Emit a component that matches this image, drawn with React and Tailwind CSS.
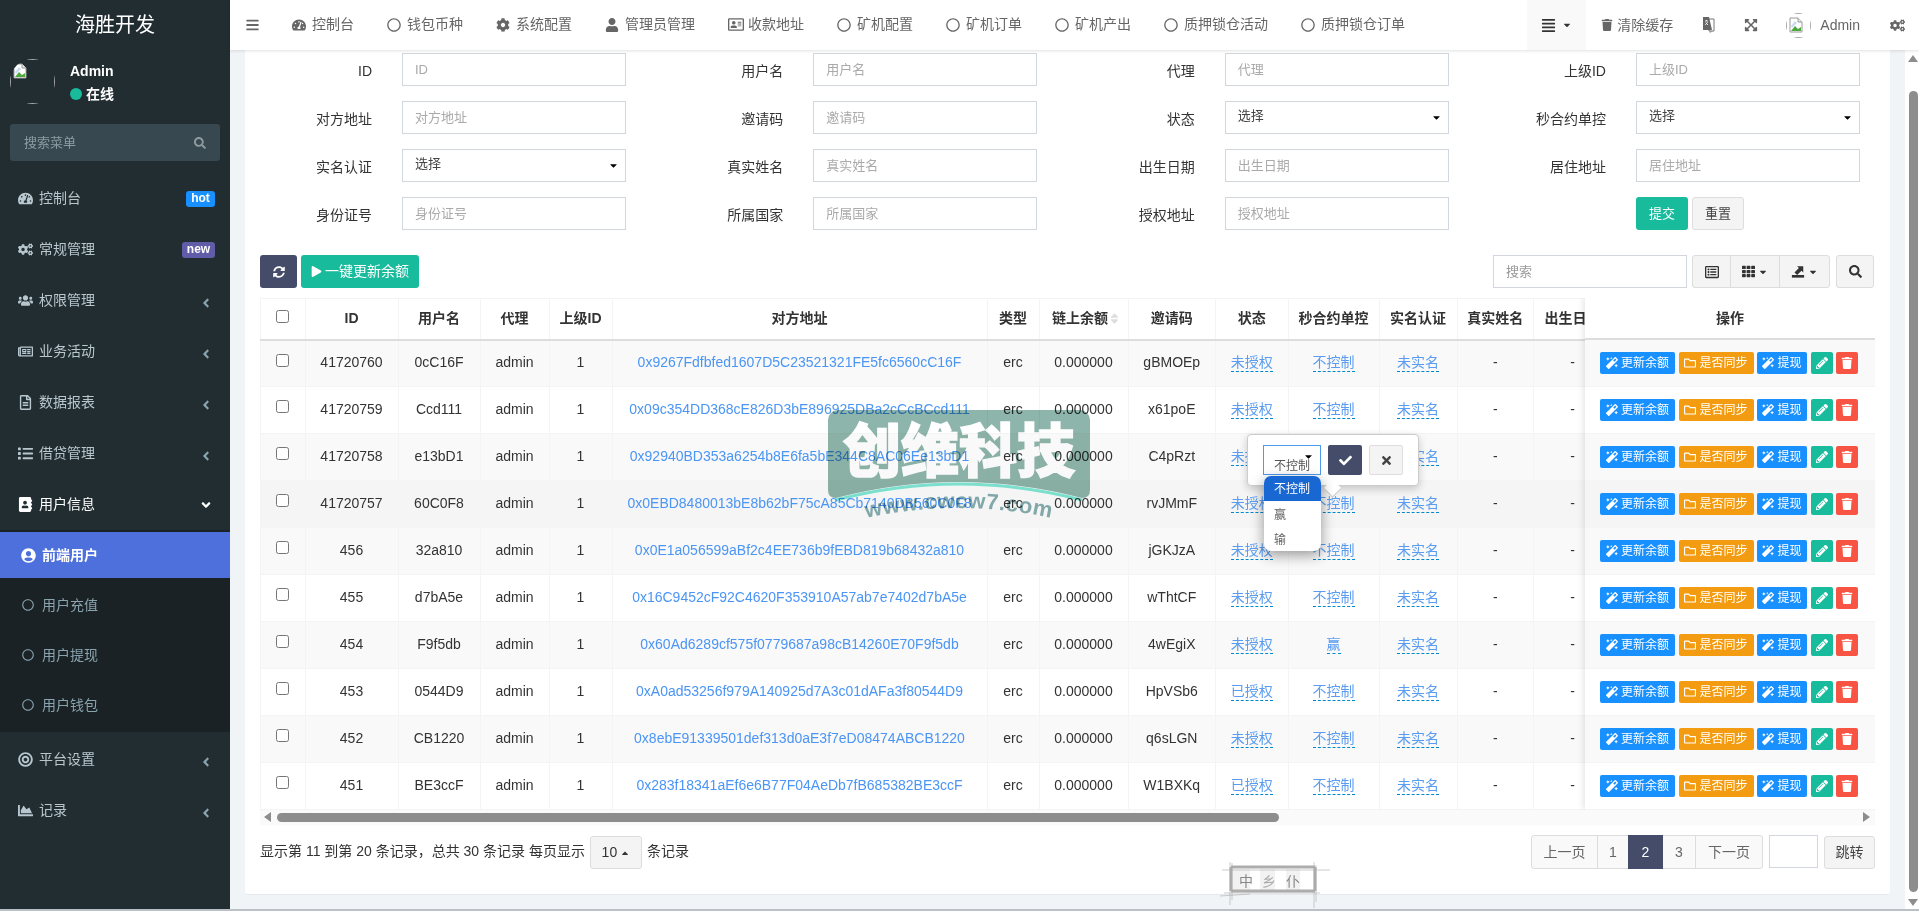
import React from 'react';
import {
  FaTachometerAlt, FaRegCircle, FaCog, FaUser, FaRegAddressCard, FaCogs, FaUsers, FaRegNewspaper,
  FaRegFileAlt, FaList, FaAddressBook, FaUserCircle, FaBullseye, FaChartArea, FaAngleLeft, FaAngleDown,
  FaSearch, FaSyncAlt, FaPlay, FaBars, FaAlignJustify, FaTrash, FaExpandArrowsAlt,
  FaRegListAlt, FaTh, FaMagic, FaRegFolder, FaPencilAlt, FaCheck, FaTimes, FaCaretDown, FaCaretUp, FaSort,
} from 'react-icons/fa';

const topNav = [
  { icon: FaTachometerAlt, text: '控制台' },
  { icon: FaRegCircle, text: '钱包币种' },
  { icon: FaCog, text: '系统配置' },
  { icon: FaUser, text: '管理员管理' },
  { icon: FaRegAddressCard, text: '收款地址', wide: true },
  { icon: FaRegCircle, text: '矿机配置' },
  { icon: FaRegCircle, text: '矿机订单' },
  { icon: FaRegCircle, text: '矿机产出' },
  { icon: FaRegCircle, text: '质押锁仓活动' },
  { icon: FaRegCircle, text: '质押锁仓订单' },
];

const formRows = [
  ['ID', '用户名', '代理', '上级ID'],
  ['对方地址', '邀请码', '状态:select', '秒合约单控:select'],
  ['实名认证:select', '真实姓名', '出生日期', '居住地址'],
  ['身份证号', '所属国家', '授权地址', null],
];

const rows = [
  ['41720760', '0cC16F', '0x9267Fdfbfed1607D5C23521321FE5fc6560cC16F', 'gBMOEp', '未授权', '不控制'],
  ['41720759', 'Ccd111', '0x09c354DD368cE826D3bE896925DBa2cCcBCcd111', 'x61poE', '未授权', '不控制'],
  ['41720758', 'e13bD1', '0x92940BD353a6254b8E6fa5bE344C8AC06Ee13bD1', 'C4pRzt', '未授权', '不控制'],
  ['41720757', '60C0F8', '0x0EBD8480013bE8b62bF75cA85Cb7140DB560C0F8', 'rvJMmF', '未授权', '不控制'],
  ['456', '32a810', '0x0E1a056599aBf2c4EE736b9fEBD819b68432a810', 'jGKJzA', '未授权', '不控制'],
  ['455', 'd7bA5e', '0x16C9452cF92C4620F353910A57ab7e7402d7bA5e', 'wThtCF', '未授权', '不控制'],
  ['454', 'F9f5db', '0x60Ad6289cf575f0779687a98cB14260E70F9f5db', '4wEgiX', '未授权', '赢'],
  ['453', '0544D9', '0xA0ad53256f979A140925d7A3c01dAFa3f80544D9', 'HpVSb6', '已授权', '不控制'],
  ['452', 'CB1220', '0x8ebE91339501def313d0aE3f7eD08474ABCB1220', 'q6sLGN', '未授权', '不控制'],
  ['451', 'BE3ccF', '0x283f18341aEf6e6B77F04AeDb7fB685382BE3ccF', 'W1BXKq', '已授权', '不控制'],
];

const rowBg = (i) => (i === 3 ? 'bg-[#f5f5f5]' : i % 2 === 0 ? 'bg-[#f9f9f9]' : 'bg-white');

// 깨진 이미지 아이콘
function BrokenImage({ className }) {
  return (
    <svg viewBox="0 0 16 16" className={className}>
      <path d="M2 1h8l4 4v10H2z" fill="#fff" stroke="#9a9a9a" strokeWidth="1" />
      <path d="M10 1v4h4" fill="#e8e8e8" stroke="#9a9a9a" strokeWidth="1" />
      <path d="M3 14l4-5 3 3 3-2v4z" fill="#4fa83d" />
      <path d="M3 9l4-5 2 2-5 5z" fill="#c9dcf2" />
    </svg>
  );
}

function Avatar({ size }) {
  return (
    <div className={`${size} shrink-0 rounded-full overflow-hidden`}>
      <div className="w-full h-full border border-[#a8a8a8] pl-[1px] pt-[3px]">
        <BrokenImage className="w-[16px] h-[16px]" />
      </div>
    </div>
  );
}

function LangIcon() {
  return (
    <svg viewBox="0 0 13 18" className="w-[13px] h-[18px] ml-[29px]">
      <path d="M5 3h7v12H7z" fill="#fff" stroke="#777" strokeWidth="1" />
      <path d="M1 1h6l3 13H1z" fill="#666" />
      <path d="M3 5h3M4.5 4v1M3.2 9l2.6-3M3.5 6.5l2.5 2.5" stroke="#fff" strokeWidth="0.8" fill="none" />
      <path d="M7 15l1 2 3-2z" fill="#999" />
    </svg>
  );
}

function SideItem({ icon: Icon, text, badge, open, active }) {
  return (
    <div className={`flex items-center h-[51px] pl-[18px] pr-[16px] ${active ? 'text-white' : 'text-[#b8c7ce]'}`}>
      <Icon className="w-[15px] text-[15px] shrink-0" />
      <span className="ml-[6px] text-[14px] flex-1">{text}</span>
      {badge === 'hot' && <span className="h-[16px] w-[29px] -mr-[1px] rounded-[3px] bg-[#1890ff] text-white text-[12px] font-bold leading-[15px] text-center">hot</span>}
      {badge === 'new' && <span className="h-[16px] w-[33px] -mr-[1px] rounded-[3px] bg-[#605ca8] text-white text-[12px] font-bold leading-[15px] text-center">new</span>}
      {badge === undefined && (open
        ? <FaAngleDown className="text-[14px] text-white mr-[1px]" />
        : <FaAngleLeft className="text-[14px] text-[#8aa4af] mt-[5px] mr-[1px]" />)}
    </div>
  );
}

function SubItem({ text }) {
  return (
    <div className="flex items-center h-[46px] pl-[22px] text-[#8aa4af] text-[14px]">
      <FaRegCircle className="text-[12px]" />
      <span className="ml-[8px]">{text}</span>
    </div>
  );
}

function Sidebar() {
  return (
    <aside className="w-[230px] shrink-0 bg-[#222d32] flex flex-col">
      <div className="h-[50px] flex items-center justify-center text-[20px] text-white">海胜开发</div>
      <div className="flex h-[74px] pl-[10px] pt-[9px]">
        <Avatar size="w-[45px] h-[45px]" />
        <div className="ml-[15px] text-white">
          <div className="text-[14px] font-bold leading-[20px] mt-[2px]">Admin</div>
          <div className="flex items-center text-[14px] font-bold leading-[20px] mt-[3px]">
            <span className="w-[12px] h-[12px] rounded-full bg-[#18bc9c] mr-[4px]"></span>在线
          </div>
        </div>
      </div>
      <div className="mx-[10px] h-[37px] rounded-[3px] bg-[#374850] flex items-center justify-between pl-[14px] pr-[14px] text-[13px] text-[#8d9ba2]">
        搜索菜单
        <FaSearch className="text-[12px] text-[#8f9a9f]" />
      </div>
      <div className="mt-[12px]">
        <SideItem icon={FaTachometerAlt} text="控制台" badge="hot" />
        <SideItem icon={FaCogs} text="常规管理" badge="new" />
        <SideItem icon={FaUsers} text="权限管理" />
        <SideItem icon={FaRegNewspaper} text="业务活动" />
        <SideItem icon={FaRegFileAlt} text="数据报表" />
        <SideItem icon={FaList} text="借贷管理" />
        <SideItem icon={FaAddressBook} text="用户信息" open active />
      </div>
      <div className="bg-[#1a2226] pt-[2px] pb-[4px] flex flex-col gap-[4px]">
        <div className="flex items-center h-[46px] pl-[21px] bg-[#4e70dc] text-white text-[14px]">
          <FaUserCircle className="text-[15px]" />
          <span className="ml-[6px] font-bold">前端用户</span>
        </div>
        <SubItem text="用户充值" />
        <SubItem text="用户提现" />
        <SubItem text="用户钱包" />
      </div>
      <div className="mt-[2px]">
        <SideItem icon={FaBullseye} text="平台设置" />
        <SideItem icon={FaChartArea} text="记录" />
      </div>
    </aside>
  );
}

function Header() {
  return (
    <header className="h-[50px] shrink-0 bg-white flex items-center justify-between shadow-[0_1px_3px_rgba(0,0,0,0.12)] relative text-[14px] text-[#666]">
      <div className="flex items-center pl-[16px] pb-[1px]">
        <FaBars className="text-[14px] w-[13px]" />
        <nav className="flex items-center gap-[33px] ml-[33px]">
          {topNav.map((item) => (
            <div key={item.text} className={`flex items-center ${item.wide ? 'gap-[4px]' : 'gap-[6px]'}`}>
              <item.icon className={`${item.wide ? 'w-[16px] text-[15px]' : 'w-[14px] text-[14px]'}`} />
              <span>{item.text}</span>
            </div>
          ))}
        </nav>
      </div>
      <div className="flex items-center pr-[14px] h-full">
        <div className="w-[59px] h-full bg-[#f9f9f9] flex items-center justify-center gap-[6px] text-[#333]">
          <FaAlignJustify className="text-[15px]" />
          <FaCaretDown className="text-[10px]" />
        </div>
        <FaTrash className="ml-[15px] text-[12px]" />
        <span className="ml-[4px]">清除缓存</span>
        <LangIcon />
        <FaExpandArrowsAlt className="ml-[29px] text-[14px]" />
        <div className="ml-[28px]"><Avatar size="w-[25px] h-[25px]" /></div>
        <span className="ml-[9px]">Admin</span>
        <FaCogs className="ml-[30px] text-[15px]" />
      </div>
    </header>
  );
}

function SearchForm() {
  return (
    <div className="grid grid-cols-[366px_411.33px_411.33px_411.33px] gap-y-[15px] text-[14px] text-[#333]">
      {formRows.flat().map((cell, idx) => {
        if (!cell) {
          return (
            <div key={idx} className="flex justify-end gap-[4px] pr-0">
              <div className="w-[224px] flex gap-[4px] text-[13px]">
                <button className="w-[52px] h-[33px] rounded-[3px] bg-[#18bc9c] text-white">提交</button>
                <button className="w-[52px] h-[33px] rounded-[3px] bg-[#f4f4f4] border border-[#ddd] text-[#444]">重置</button>
              </div>
            </div>
          );
        }
        const [label, kind] = cell.split(':');
        return (
          <div key={idx} className="flex items-center justify-end gap-[30px]">
            <label className="pt-[3px]">{label}</label>
            {kind === 'select' ? (
              <div className="w-[224px] h-[33px] border border-[#d2d6de] flex items-center justify-between pl-[12px] pr-[6px] pb-[3px] text-[13px] text-[#444]">
                选择
                <FaCaretDown className="text-[11px] text-black mt-[3px]" />
              </div>
            ) : (
              <input placeholder={label} className="w-[224px] h-[33px] border border-[#d2d6de] px-[12px] text-[13px] outline-none placeholder:text-[#aaa]" />
            )}
          </div>
        );
      })}
    </div>
  );
}

function ExportIcon() {
  return (
    <svg viewBox="0 0 16 16" className="w-[14px] h-[15px]" fill="currentColor">
      <path d="M1 12h14v3H1z" />
      <path d="M4 9l5-5-2-2h7v7l-2-2-5 5z" />
    </svg>
  );
}

function Toolbar() {
  return (
    <div className="flex items-center justify-between mt-[25px] h-[33px] pr-[1px] text-[#333]">
      <div className="flex gap-[4px]">
        <button className="w-[37px] h-[33px] rounded-[3px] bg-[#444c69] text-white flex items-center justify-center">
          <FaSyncAlt className="text-[12px]" />
        </button>
        <button className="w-[118px] h-[33px] rounded-[3px] bg-[#18bc9c] text-white text-[14px] flex items-center justify-center gap-[3px]">
          <FaPlay className="text-[11px]" />一键更新余额
        </button>
      </div>
      <div className="flex">
        <input placeholder="搜索" className="w-[194px] h-[33px] border border-[#d2d6de] px-[12px] text-[13px] outline-none placeholder:text-[#999]" />
        <div className="flex ml-[5px] h-[33px] rounded-[3px] border border-[#ddd] bg-[#f4f4f4]">
          <div className="w-[38px] flex items-center justify-center border-r border-[#ddd]"><FaRegListAlt className="text-[14px]" /></div>
          <div className="w-[49px] flex items-center justify-center gap-[3px] border-r border-[#ddd]"><FaTh className="text-[13px]" /><FaCaretDown className="text-[10px]" /></div>
          <div className="w-[49px] flex items-center justify-center gap-[3px]"><ExportIcon /><FaCaretDown className="text-[10px]" /></div>
        </div>
        <button className="w-[38px] h-[33px] ml-[6px] rounded-[3px] border border-[#ddd] bg-[#f4f4f4] flex items-center justify-center"><FaSearch className="text-[13px]" /></button>
      </div>
    </div>
  );
}

function Editable({ children }) {
  return <span className="text-[#5a9cf0] border-b border-dashed border-[#0088cc] pb-[1px]">{children}</span>;
}

function OpButton({ color, width, icon: Icon, text }) {
  return (
    <button className={`${color} ${width} h-[22px] rounded-[2px] text-white text-[12px] flex items-center justify-center gap-[3px] shrink-0`}>
      <Icon className="text-[12px]" />
      {text && <span>{text}</span>}
    </button>
  );
}

function DataTable() {
  const th = 'font-bold text-[14px] text-[#333] border-l border-[#f4f4f4] text-center';
  const td = 'border-l border-[#f4f4f4] text-center text-[14px] whitespace-nowrap overflow-hidden pb-[2px]';
  const dark = `${td} text-[#333]`;
  return (
    <div className="relative mt-[10px] h-[512px] overflow-hidden">
      <table className="table-fixed border-collapse w-[1615px]">
        <colgroup>
          {[44.5, 93, 82, 69, 63, 375, 52, 89, 87.5, 72.5, 91, 78, 76.5, 78, 264].map((w, i) => (
            <col key={i} style={{ width: w }} />
          ))}
        </colgroup>
        <thead>
          <tr className="h-[41px] border-t border-b-2 border-[#f4f4f4] border-b-[#ddd]">
            <th className={th}><input type="checkbox" className="w-[13px] h-[13px] align-middle -mt-[7px]" /></th>
            <th className={th}>ID</th>
            <th className={th}>用户名</th>
            <th className={th}>代理</th>
            <th className={th}>上级ID</th>
            <th className={th}>对方地址</th>
            <th className={th}>类型</th>
            <th className={th}>
              <span className="inline-flex items-center pl-[6px]">链上余额<FaSort className="text-[13px] text-[#ddd]" /></span>
            </th>
            <th className={th}>邀请码</th>
            <th className={th}>状态</th>
            <th className={th}>秒合约单控</th>
            <th className={th}>实名认证</th>
            <th className={th}>真实姓名</th>
            <th className={`${th} whitespace-nowrap overflow-hidden`}>出生日期</th>
            <th className={th}></th>
          </tr>
        </thead>
        <tbody>
          {rows.map((r, i) => (
            <tr key={r[0]} className={`h-[47px] border-b border-[#f4f4f4] ${rowBg(i)}`}>
              <td className={dark}><input type="checkbox" className="w-[13px] h-[13px] align-middle -mt-[6px]" /></td>
              <td className={dark}>{r[0]}</td>
              <td className={dark}>{r[1]}</td>
              <td className={dark}>admin</td>
              <td className={dark}>1</td>
              <td className={`${td} text-[#4b95f5]`}>{r[2]}</td>
              <td className={dark}>erc</td>
              <td className={dark}>0.000000</td>
              <td className={dark}>{r[3]}</td>
              <td className={td}><Editable>{r[4]}</Editable></td>
              <td className={td}><Editable>{r[5]}</Editable></td>
              <td className={td}><Editable>未实名</Editable></td>
              <td className={dark}>-</td>
              <td className={dark}>-</td>
              <td className={td}></td>
            </tr>
          ))}
        </tbody>
      </table>
      {/* 고정된 操作 칼럼 */}
      <div className="absolute top-0 right-0 w-[290px] h-[511px] bg-white shadow-[-2px_0_6px_rgba(0,0,0,0.1)]">
        <div className="h-[42px] flex items-center justify-center border-b-2 border-[#ddd] font-bold text-[14px] text-[#333]">操作</div>
        {rows.map((r, i) => (
          <div key={r[0]} className={`h-[47px] flex items-center gap-[3.5px] pl-[15px] border-b border-[#f4f4f4] ${rowBg(i)}`}>
            <OpButton color="bg-[#1890ff]" width="w-[75px]" icon={FaMagic} text="更新余额" />
            <OpButton color="bg-[#f39c12]" width="w-[75px]" icon={FaRegFolder} text="是否同步" />
            <OpButton color="bg-[#1890ff]" width="w-[50px]" icon={FaMagic} text="提现" />
            <OpButton color="bg-[#18bc9c]" width="w-[22px]" icon={FaPencilAlt} />
            <OpButton color="bg-[#f75444]" width="w-[22px]" icon={FaTrash} />
          </div>
        ))}
      </div>
    </div>
  );
}

function HScroll() {
  return (
    <div className="h-[16px] -mt-[1px] bg-[#fafafa] flex items-center pl-[4px] pr-[5px] text-[#8d8d8d]">
      <span className="w-0 h-0 border-y-[5px] border-y-transparent border-r-[7px] border-r-[#8d8d8d]"></span>
      <div className="ml-[6px] w-[1002px] h-[9px] rounded-full bg-[#8d8d8d]"></div>
      <span className="ml-auto w-0 h-0 border-y-[5px] border-y-transparent border-l-[7px] border-l-[#8d8d8d]"></span>
    </div>
  );
}

function Footer() {
  const cell = 'h-[34px] flex items-center justify-center border border-[#ddd] bg-[#f9f9f9] text-[#666] -ml-[1px]';
  return (
    <div className="flex justify-between mt-[10px] text-[14px] text-[#333]">
      <div className="flex items-start">
        <span className="leading-[33px]">显示第 11 到第 20 条记录，总共 30 条记录 每页显示</span>
        <div className="ml-[5px] mt-[1px] w-[52px] h-[33px] rounded-[3px] border border-[#ddd] bg-[#f4f4f4] flex items-center justify-center gap-[3px]">
          10 <FaCaretUp className="text-[10px]" />
        </div>
        <span className="ml-[5px] leading-[33px]">条记录</span>
      </div>
      <div className="flex items-start">
        <div className={`${cell} w-[67px] ml-0 rounded-l-[3px]`}>上一页</div>
        <div className={`${cell} w-[32px]`}>1</div>
        <div className="h-[34px] w-[35px] -ml-[1px] flex items-center justify-center bg-[#444c69] text-white">2</div>
        <div className={`${cell} w-[33px] border-l-0 ml-0`}>3</div>
        <div className={`${cell} w-[68px] rounded-r-[3px]`}>下一页</div>
        <input className="ml-[6px] w-[49px] h-[33px] border border-[#d2d6de] outline-none" />
        <button className="ml-[6px] w-[51px] h-[33px] mt-[1px] rounded-[3px] border border-[#ddd] bg-[#f4f4f4] text-[#444]">跳转</button>
      </div>
    </div>
  );
}

function Watermark() {
  return (
    <svg viewBox="0 0 262 122" className="absolute left-[828px] top-[410px] w-[262px] h-[122px] mix-blend-multiply">
      <path d="M10 0H252A10 10 0 0 1 262 10V80Q262 88 254 88Q130 56 8 88Q0 88 0 80V10A10 10 0 0 1 10 0Z" fill="#8eb5ab" />
      <path d="M8 90Q130 58 254 90" fill="none" stroke="#7fe8d5" strokeWidth="3" />
      <text x="131" y="62" textAnchor="middle" fontSize="58" fontWeight="900" fill="#fff" stroke="#fff" strokeWidth="1.5" fontFamily="'Noto Sans CJK SC', sans-serif">创维科技</text>
      <path id="wm-arc" d="M0 118Q130 78 262 118" fill="none" />
      <text fontSize="22" fontWeight="700" fill="#86aeb0" fontFamily="'Liberation Sans', sans-serif" letterSpacing="0.6">
        <textPath href="#wm-arc" startOffset="50%" textAnchor="middle">www.cwcw7.com</textPath>
      </text>
    </svg>
  );
}

function Seal() {
  return (
    <svg viewBox="0 0 110 46" className="absolute left-[1220px] top-[862px] w-[110px] h-[46px]">
      <rect x="11" y="4" width="84" height="26" fill="#fff" />
      <path d="M13 7h17v21H13zM40 7h15v21H40zM66 7h14v21H66z" fill="#e9e9e9" opacity="0.6" />
      <path d="M11 5H95M11 29H95M11 5V29M95 5V29" stroke="#999" strokeWidth="3" fill="none" opacity="0.8" />
      <path d="M2 8H110M4 31H100M0 34L30 32M10 0V43M94 0V46M12 1V38M96 3V40" stroke="#aaa" strokeWidth="1" fill="none" opacity="0.6" />
      <text x="26" y="24" fontSize="14" textAnchor="middle" fill="#888" fontFamily="'Noto Sans CJK SC', sans-serif">中</text>
      <text x="49" y="24" fontSize="14" textAnchor="middle" fill="#aaa" fontFamily="'Noto Sans CJK SC', sans-serif">乡</text>
      <text x="73" y="24" fontSize="14" textAnchor="middle" fill="#888" fontFamily="'Noto Sans CJK SC', sans-serif">仆</text>
    </svg>
  );
}

// x-editable 팝오버 + 열린 select
function Popover() {
  return (
    <>
      <div className="absolute left-[1247px] top-[434px] w-[172px] h-[52px] bg-white rounded-[4px] border border-[#ccc] shadow-[0_3px_8px_rgba(0,0,0,0.2)] flex items-center pl-[15px] gap-[7px]">
        <div className="w-[58px] h-[30px] border border-[#4d9bef] text-[12px] text-[#555] pl-[10px] pt-[13px] leading-[15px] relative">
          不控制
          <FaCaretDown className="absolute right-[6px] top-[5px] text-[11px] text-black" />
        </div>
        <button className="w-[34px] h-[30px] rounded-[2px] bg-[#444c69] text-white flex items-center justify-center"><FaCheck className="text-[13px]" /></button>
        <button className="w-[34px] h-[30px] rounded-[2px] bg-[#f4f4f4] border border-[#ddd] text-[#444] flex items-center justify-center"><FaTimes className="text-[13px]" /></button>
      </div>
      <div className="absolute left-[1326px] top-[482px] w-[13px] h-[13px] rotate-45 bg-white border-r border-b border-[#ccc]"></div>
      <div className="absolute left-[1264px] top-[476px] w-[57px] h-[75px] bg-white rounded-[7px] overflow-hidden shadow-[0_4px_14px_rgba(0,0,0,0.4)] text-[12px] text-[#666]">
        <div className="h-[25px] bg-[#1967d2] text-white pl-[10px] leading-[27px]">不控制</div>
        <div className="h-[25px] pl-[10px] leading-[29px]">赢</div>
        <div className="h-[25px] pl-[10px] leading-[29px]">输</div>
      </div>
    </>
  );
}

function ScrollBar() {
  return (
    <div className="w-[14px] shrink-0 bg-white flex flex-col items-center pl-[2px]">
      <span className="mt-[5px] w-0 h-0 border-x-[5px] border-x-transparent border-b-[7px] border-b-[#8d8d8d]"></span>
      <div className="mt-[29px] w-[9px] h-[801px] rounded-full bg-[#8d8d8d]"></div>
      <span className="mt-[7px] w-0 h-0 border-x-[5px] border-x-transparent border-t-[7px] border-t-[#8d8d8d]"></span>
    </div>
  );
}

export default function App() {
  return (
    <div className="relative w-[1919px] h-[911px] overflow-hidden flex flex-col bg-[#f1f4f6] font-['Liberation_Sans','Noto_Sans_CJK_SC',sans-serif]">
      <div className="flex h-[909px]">
        <Sidebar />
        <div className="flex-1 flex flex-col min-w-0">
          <Header />
          <div className="flex-1 flex min-h-0">
            <main className="flex-1 px-[15px] min-w-0">
              <div className="h-[845px] bg-white rounded-b-[3px] px-[15px] pt-[3px] border-b border-[#e6e9ec]">
                <SearchForm />
                <Toolbar />
                <DataTable />
                <HScroll />
                <Footer />
              </div>
            </main>
            <ScrollBar />
          </div>
        </div>
      </div>
      <div className="h-[2px] bg-[#b9c0c6]"></div>
      <Watermark />
      <Seal />
      <Popover />
    </div>
  );
}
